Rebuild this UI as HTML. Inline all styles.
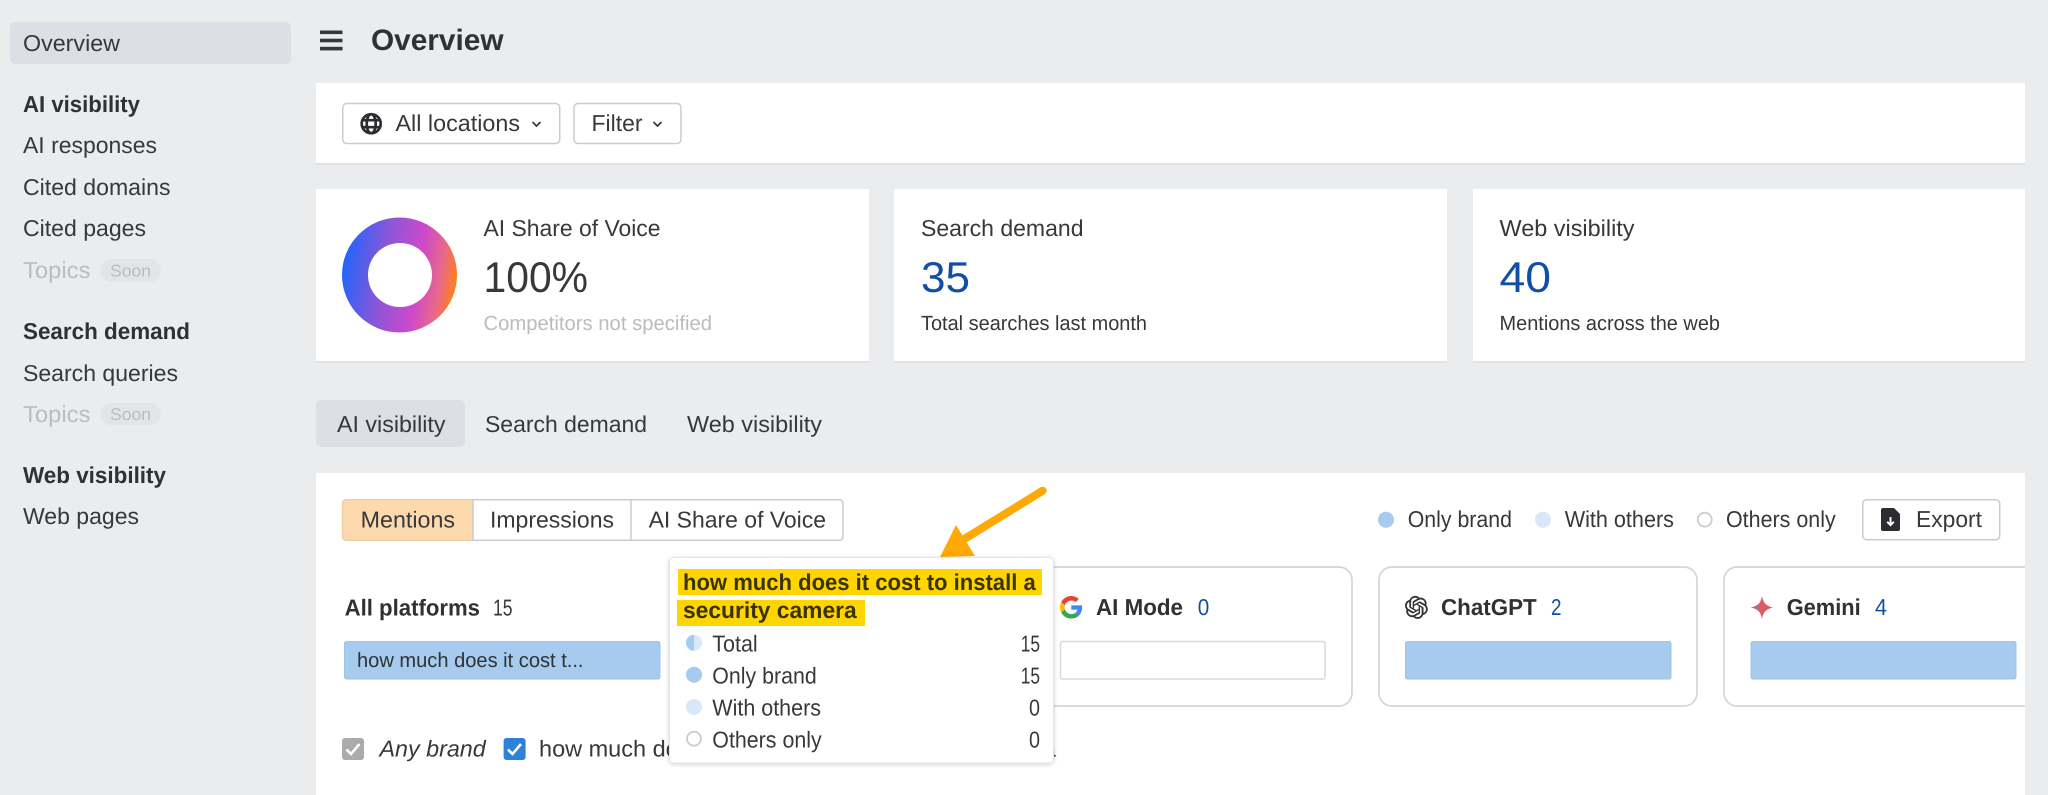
<!DOCTYPE html>
<html lang="en"><head><meta charset="utf-8"><title>Overview</title>
<style>
html,body{margin:0;padding:0;background:#ebecee;width:2048px;height:795px;overflow:hidden}
svg{display:block;position:absolute;left:0;top:0}
text{font-family:"Liberation Sans",sans-serif;font-size:23px;fill:#36383b;text-rendering:geometricPrecision}
.b{font-weight:700;fill:#2f3134}
.m{fill:#bbbcbe}
.s{font-size:20.5px}
.n{fill:#0f4fa8}
</style></head><body>
<svg width="2048" height="795" viewBox="0 0 2048 795" xmlns="http://www.w3.org/2000/svg">
<defs>
<linearGradient id="dg" x1="0" y1="0.42" x2="1" y2="0.58">
<stop offset="0" stop-color="#1f66fb"/><stop offset=".35" stop-color="#8b56d8"/><stop offset=".66" stop-color="#ce49ca"/><stop offset=".85" stop-color="#e8688a"/><stop offset="1" stop-color="#ff8210"/>
</linearGradient>
<clipPath id="pc"><rect x="316" y="473" width="1709" height="322"/></clipPath>
<filter id="sh" x="-5%" y="-5%" width="110%" height="112%"><feDropShadow dx="0" dy="1" stdDeviation="2" flood-color="#000" flood-opacity=".18"/></filter>
</defs>
<rect width="2048" height="795" fill="#ebecee"/>

<!-- sidebar -->
<rect x="10" y="22" width="281" height="42" rx="5" fill="#dcdfe3"/>
<text lengthAdjust="spacingAndGlyphs" x="23" y="51" textLength="97">Overview</text>
<text lengthAdjust="spacingAndGlyphs" class="b" x="23" y="112" textLength="117">AI visibility</text>
<text lengthAdjust="spacingAndGlyphs" x="23" y="153" textLength="134">AI responses</text>
<text lengthAdjust="spacingAndGlyphs" x="23" y="195" textLength="147.5">Cited domains</text>
<text lengthAdjust="spacingAndGlyphs" x="23" y="236" textLength="123">Cited pages</text>
<text lengthAdjust="spacingAndGlyphs" class="m" x="23" y="278" textLength="67.5">Topics</text>
<rect x="100" y="259" width="61" height="23" rx="11.5" fill="#e3e4e7"/>
<text lengthAdjust="spacingAndGlyphs" class="m" style="font-size:17px" x="110" y="276.5" textLength="41">Soon</text>
<text lengthAdjust="spacingAndGlyphs" class="b" x="23" y="339" textLength="167">Search demand</text>
<text lengthAdjust="spacingAndGlyphs" x="23" y="381" textLength="155">Search queries</text>
<text lengthAdjust="spacingAndGlyphs" class="m" x="23" y="422" textLength="67.5">Topics</text>
<rect x="100" y="403" width="61" height="22" rx="11" fill="#e3e4e7"/>
<text lengthAdjust="spacingAndGlyphs" class="m" style="font-size:17px" x="110" y="420" textLength="41">Soon</text>
<text lengthAdjust="spacingAndGlyphs" class="b" x="23" y="483" textLength="143">Web visibility</text>
<text lengthAdjust="spacingAndGlyphs" x="23" y="524" textLength="116">Web pages</text>

<!-- header -->
<g fill="#36383b"><rect x="320" y="30.500" width="22.500" height="3.600"/><rect x="320" y="38.700" width="22.500" height="3.600"/><rect x="320" y="46.800" width="22.500" height="3.600"/></g>
<text lengthAdjust="spacingAndGlyphs" class="b" style="font-size:29.500px" x="371" y="50" textLength="132.500">Overview</text>

<!-- filter bar -->
<rect x="316" y="83" width="1709" height="82" fill="#e1e2e5"/>
<rect x="316" y="83" width="1709" height="80" fill="#fff"/>
<rect x="342.750" y="103.500" width="217" height="40" rx="4" fill="#fff" stroke="#cbccce" stroke-width="1.500"/>
<g transform="translate(360.500 113)" fill="none" stroke="#2b2d30" stroke-width="2.700">
<circle cx="10.700" cy="10.700" r="9.500"/><ellipse cx="10.700" cy="10.700" rx="4.500" ry="9.500"/><path d="M1.500 7.200h18.400M1.500 14.200h18.400"/>
</g>
<text lengthAdjust="spacingAndGlyphs" x="395.500" y="131" textLength="124.500">All locations</text>
<path d="M532.500 122l4 4 4-4" fill="none" stroke="#36383b" stroke-width="1.700"/>
<rect x="574" y="103.500" width="107" height="40" rx="4" fill="#fff" stroke="#cbccce" stroke-width="1.500"/>
<text lengthAdjust="spacingAndGlyphs" x="591.500" y="131" textLength="51">Filter</text>
<path d="M653.500 122l4 4 4-4" fill="none" stroke="#36383b" stroke-width="1.700"/>

<!-- metric cards -->
<g fill="#e1e2e5"><rect x="316" y="189" width="553" height="174"/><rect x="894" y="189" width="553" height="174"/><rect x="1473" y="189" width="552" height="174"/></g>
<g fill="#fff"><rect x="316" y="189" width="553" height="172"/><rect x="894" y="189" width="553" height="172"/><rect x="1473" y="189" width="552" height="172"/></g>
<path fill="url(#dg)" fill-rule="evenodd" d="M342 275a57.500 57.500 0 1 0 115 0a57.500 57.500 0 1 0-115 0zM368 275a32 32 0 1 1 64 0a32 32 0 1 1-64 0z"/>
<text lengthAdjust="spacingAndGlyphs" x="483.500" y="236" textLength="177">AI Share of Voice</text>
<text lengthAdjust="spacingAndGlyphs" style="font-size:43px" x="483.500" y="292" textLength="104.500">100%</text>
<text lengthAdjust="spacingAndGlyphs" class="s m" x="483.500" y="330" textLength="228.500">Competitors not specified</text>
<text lengthAdjust="spacingAndGlyphs" x="921" y="236" textLength="162.500">Search demand</text>
<text lengthAdjust="spacingAndGlyphs" class="n" style="font-size:43px" x="921" y="292" textLength="49">35</text>
<text lengthAdjust="spacingAndGlyphs" class="s" x="921" y="330" textLength="226">Total searches last month</text>
<text lengthAdjust="spacingAndGlyphs" x="1499.500" y="236" textLength="135">Web visibility</text>
<text lengthAdjust="spacingAndGlyphs" class="n" style="font-size:43px" x="1499.500" y="292" textLength="51.500">40</text>
<text lengthAdjust="spacingAndGlyphs" class="s" x="1499.500" y="330" textLength="220.500">Mentions across the web</text>

<!-- tabs -->
<rect x="316" y="400" width="149" height="47" rx="5" fill="#dcdfe3"/>
<text lengthAdjust="spacingAndGlyphs" x="337" y="432" textLength="108.500">AI visibility</text>
<text lengthAdjust="spacingAndGlyphs" x="485" y="432" textLength="162">Search demand</text>
<text lengthAdjust="spacingAndGlyphs" x="687" y="432" textLength="135">Web visibility</text>

<!-- main panel -->
<rect x="316" y="473" width="1709" height="322" fill="#fff"/>
<path d="M473 499.750H346a3.500 3.500 0 0 0-3.500 3.500v33.500a3.500 3.500 0 0 0 3.500 3.500H473z" fill="#fdd9ae" stroke="#f1cfa5" stroke-width="1.500"/>
<path d="M473 499.750H839.500a3.500 3.500 0 0 1 3.500 3.500v33.500a3.500 3.500 0 0 1-3.500 3.500H473z" fill="#fff" stroke="#cbccce" stroke-width="1.500"/>
<path d="M631 500v40" stroke="#cbccce" stroke-width="1.500"/>
<text lengthAdjust="spacingAndGlyphs" x="360.700" y="527.500" textLength="94.300">Mentions</text>
<text lengthAdjust="spacingAndGlyphs" x="490" y="527.500" textLength="124">Impressions</text>
<text lengthAdjust="spacingAndGlyphs" x="648.600" y="527.500" textLength="177.400">AI Share of Voice</text>

<circle cx="1386" cy="519.700" r="8" fill="#a6cbee"/>
<text lengthAdjust="spacingAndGlyphs" x="1407.700" y="527" textLength="104.300">Only brand</text>
<circle cx="1543" cy="519.700" r="8" fill="#d8e8f9"/>
<text lengthAdjust="spacingAndGlyphs" x="1564.700" y="527" textLength="109.300">With others</text>
<circle cx="1704.700" cy="519.700" r="7" fill="#fff" stroke="#cbccce" stroke-width="1.800"/>
<text lengthAdjust="spacingAndGlyphs" x="1726" y="527" textLength="109.700">Others only</text>
<rect x="1862.750" y="499.750" width="137" height="40" rx="4" fill="#fff" stroke="#cbccce" stroke-width="1.500"/>
<path d="M1883 508h11l6 6v15a2 2 0 0 1-2 2h-15a2 2 0 0 1-2-2v-19a2 2 0 0 1 2-2z" fill="#2b2d30"/>
<path d="M1890.500 517v7.500M1887.200 521.800l3.300 3.300 3.300-3.300" fill="none" stroke="#fff" stroke-width="1.900"/>
<text lengthAdjust="spacingAndGlyphs" x="1916" y="527" textLength="66">Export</text>

<!-- All platforms -->
<text lengthAdjust="spacingAndGlyphs" class="b" x="344.600" y="615.500" textLength="135.400">All platforms</text>
<text lengthAdjust="spacingAndGlyphs" x="493" y="615.500" textLength="19.500">15</text>
<rect x="344.500" y="641.500" width="315.500" height="37.500" rx="2" fill="#a6cbee" stroke="#9dc3e8"/>
<text lengthAdjust="spacingAndGlyphs" class="s" x="357" y="667" textLength="226.500" style="fill:#303236">how much does it cost t...</text>

<!-- platform cards -->
<g clip-path="url(#pc)" fill="#fff" stroke="#d4d5d7" stroke-width="1.700">
<rect x="689" y="567" width="318" height="139" rx="13"/>
<rect x="1034" y="567" width="318" height="139" rx="13"/>
<rect x="1379" y="567" width="318" height="139" rx="13"/>
<rect x="1724" y="567" width="340" height="139" rx="13"/>
</g>
<rect x="1060.500" y="641.500" width="264.500" height="37.500" rx="2" fill="#fff" stroke="#d8d9db" stroke-width="1.500"/>
<rect x="1405.500" y="641.500" width="265.500" height="37.500" rx="2" fill="#a6cbee" stroke="#9dc3e8"/>
<rect x="1751" y="641.500" width="265" height="37.500" rx="2" fill="#a6cbee" stroke="#9dc3e8"/>

<g transform="translate(1060 596) scale(.47)">
<path fill="#EA4335" d="M24 9.500c3.540 0 6.710 1.220 9.210 3.600l6.850-6.850C35.900 2.380 30.470 0 24 0 14.620 0 6.510 5.380 2.560 13.220l7.980 6.190C12.430 13.720 17.740 9.500 24 9.500z"/>
<path fill="#4285F4" d="M46.980 24.550c0-1.570-.15-3.090-.38-4.550H24v9.020h12.940c-.58 2.960-2.260 5.480-4.780 7.180l7.730 6c4.510-4.180 7.090-10.360 7.090-17.650z"/>
<path fill="#FBBC05" d="M10.530 28.590c-.48-1.450-.76-2.990-.76-4.590s.27-3.140.76-4.590l-7.980-6.190C.92 16.460 0 20.120 0 24c0 3.880.92 7.540 2.560 10.780l7.970-6.190z"/>
<path fill="#34A853" d="M24 48c6.480 0 11.930-2.130 15.890-5.810l-7.730-6c-2.150 1.450-4.920 2.300-8.160 2.300-6.260 0-11.570-4.220-13.470-9.910l-7.980 6.190C6.510 42.620 14.620 48 24 48z"/>
</g>
<text lengthAdjust="spacingAndGlyphs" class="b" x="1096" y="615" textLength="87">AI Mode</text>
<text lengthAdjust="spacingAndGlyphs" class="n" x="1197.700" y="615" textLength="11.500">0</text>

<g transform="translate(1405 596) scale(.95)"><path fill="#2f3134" stroke="#2f3134" stroke-width=".35" d="M22.282 9.821a5.985 5.985 0 0 0-.516-4.911 6.046 6.046 0 0 0-6.510-2.900A6.065 6.065 0 0 0 4.981 4.182a5.985 5.985 0 0 0-3.998 2.900 6.046 6.046 0 0 0 .743 7.097 5.980 5.980 0 0 0 .511 4.911 6.051 6.051 0 0 0 6.515 2.900A5.985 5.985 0 0 0 13.260 24a6.056 6.056 0 0 0 5.772-4.206 5.990 5.990 0 0 0 3.998-2.900 6.056 6.056 0 0 0-.748-7.073zM13.260 22.430a4.476 4.476 0 0 1-2.876-1.041l.142-.08 4.778-2.758a.795.795 0 0 0 .393-.681v-6.737l2.020 1.169a.071.071 0 0 1 .038.052v5.583a4.504 4.504 0 0 1-4.495 4.493zm-9.660-4.125a4.471 4.471 0 0 1-.535-3.014l.142.085 4.783 2.758a.771.771 0 0 0 .781 0l5.843-3.368v2.332a.08.08 0 0 1-.033.062L9.740 19.950a4.499 4.499 0 0 1-6.141-1.646zM2.341 7.896a4.485 4.485 0 0 1 2.366-1.973V11.600a.766.766 0 0 0 .388.677l5.814 3.354-2.020 1.169a.076.076 0 0 1-.071 0l-4.830-2.787A4.504 4.504 0 0 1 2.340 7.872zm16.596 3.856-5.833-3.387 2.015-1.164a.076.076 0 0 1 .071 0l4.830 2.791a4.494 4.494 0 0 1-.676 8.104v-5.677a.790.790 0 0 0-.407-.667zm2.011-3.023-.142-.085-4.774-2.782a.776.776 0 0 0-.785 0L9.409 9.230V6.897a.066.066 0 0 1 .028-.061l4.830-2.787a4.499 4.499 0 0 1 6.680 4.660zM8.306 12.863l-2.020-1.164a.080.080 0 0 1-.038-.057V6.074a4.499 4.499 0 0 1 7.376-3.454l-.142.081-4.778 2.758a.795.795 0 0 0-.393.681zm1.098-2.365 2.602-1.500 2.607 1.500v3l-2.597 1.500-2.607-1.500z"/></g>
<text lengthAdjust="spacingAndGlyphs" class="b" x="1441" y="615" textLength="95.700">ChatGPT</text>
<text lengthAdjust="spacingAndGlyphs" class="n" x="1551" y="615" textLength="10.500">2</text>

<path d="M1762 596c1.300 7 4 10 11 11.500c-7 1.500-9.700 4.500-11 11.500c-1.300-7-4-10-11-11.500c7-1.500 9.700-4.500 11-11.500z" fill="#dc5c63"/>
<path d="M1751 607.500c3-.6 5-1.400 6.500-2.600v5.200c-1.500-1.200-3.500-2-6.500-2.600z" fill="#a866c8"/>
<text lengthAdjust="spacingAndGlyphs" class="b" x="1786.700" y="615" textLength="74">Gemini</text>
<text lengthAdjust="spacingAndGlyphs" class="n" x="1875" y="615" textLength="12">4</text>

<!-- checkboxes -->
<rect x="342" y="738" width="22" height="22" rx="3" fill="#aaabad"/>
<path d="M346.500 749.500l4.500 4.500 8.500-10" fill="none" stroke="#fff" stroke-width="2.600"/>
<text lengthAdjust="spacingAndGlyphs" x="379.500" y="756.500" textLength="106.200" style="font-style:italic">Any brand</text>
<rect x="503.600" y="738" width="22" height="22" rx="3" fill="#2f80d8"/>
<path d="M508 749.500l4.500 4.500 8.500-10" fill="none" stroke="#fff" stroke-width="2.600"/>
<text lengthAdjust="spacingAndGlyphs" x="539" y="756.500" textLength="517">how much does it cost to install a security camera</text>

<!-- arrow -->
<path d="M1042.700 490.700L960 541.700" stroke="#ffa806" stroke-width="8" stroke-linecap="round" fill="none"/>
<path d="M940 557L956 525L975 556z" fill="#ffa806"/>

<!-- tooltip -->
<rect x="669.500" y="557.500" width="384" height="205.500" rx="4" fill="#fff" stroke="#e4e5e7" filter="url(#sh)"/>
<rect x="678" y="569" width="364" height="26" fill="#ffd500"/>
<rect x="677" y="600" width="188" height="26" fill="#ffd500"/>
<text lengthAdjust="spacingAndGlyphs" class="b" style="fill:#3a3300" x="683" y="590" textLength="352.700">how much does it cost to install a</text>
<text lengthAdjust="spacingAndGlyphs" class="b" style="fill:#3a3300" x="683" y="618" textLength="173.700">security camera</text>

<circle cx="694" cy="642.700" r="8" fill="#d8e8f9"/>
<path d="M694 634.700a8 8 0 0 0 0 16z" fill="#a6cbee"/>
<circle cx="694" cy="674.700" r="8" fill="#a6cbee"/>
<circle cx="694" cy="707" r="8" fill="#d8e8f9"/>
<circle cx="694" cy="738.700" r="7" fill="#fff" stroke="#cbccce" stroke-width="1.800"/>
<text lengthAdjust="spacingAndGlyphs" x="712.300" y="651.500" textLength="45.400">Total</text>
<text lengthAdjust="spacingAndGlyphs" x="712.300" y="683.500" textLength="104.400">Only brand</text>
<text lengthAdjust="spacingAndGlyphs" x="712.300" y="715.500" textLength="108.700">With others</text>
<text lengthAdjust="spacingAndGlyphs" x="712.300" y="747.500" textLength="109.400">Others only</text>
<text lengthAdjust="spacingAndGlyphs" x="1020.700" y="651.500" textLength="19.300">15</text>
<text lengthAdjust="spacingAndGlyphs" x="1020.700" y="683.500" textLength="19.300">15</text>
<text lengthAdjust="spacingAndGlyphs" x="1029" y="715.500" textLength="11">0</text>
<text lengthAdjust="spacingAndGlyphs" x="1029" y="747.500" textLength="11">0</text>
</svg>
</body></html>
